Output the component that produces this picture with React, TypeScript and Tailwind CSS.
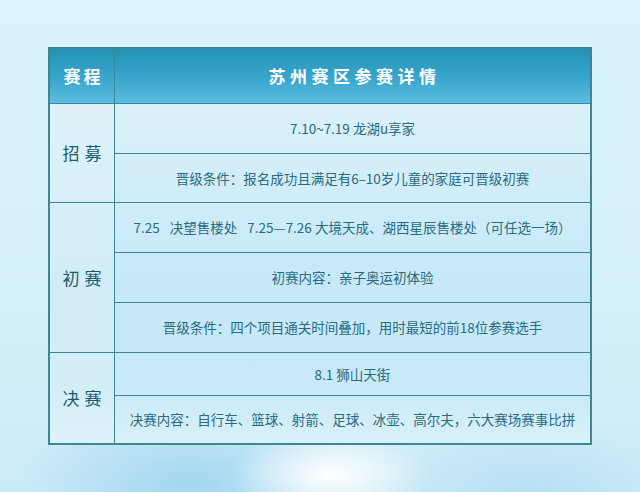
const cell = 'flex items-center justify-center border-r border-b border-[#3d8693] text-center';

function Row({ children, last }: { children: React.ReactNode; last?: boolean }) {
  return (
    <div className={`${cell} text-[13.5px] text-[#2a6b80] ${last ? 'border-b-2' : ''} border-r-2`}>
      {children}
    </div>
  );
}

function Stage({ label, span, last }: { label: string; span: string; last?: boolean }) {
  return (
    <div className={`${cell} ${span} ${last ? 'border-b-2' : ''} text-[17px] tracking-[5px] pl-[5px] text-[#1e5b6d] bg-[#e6f6fb]/40`}>
      {label}
    </div>
  );
}

export default function App() {
  return (
    <div className="h-[492px] w-[640px] overflow-hidden font-['Noto_Sans_CJK_SC',sans-serif] bg-[radial-gradient(ellipse_100px_45px_at_330px_475px,#ffffff_0%,rgba(255,255,255,0)_100%),radial-gradient(ellipse_170px_80px_at_190px_485px,#a3d6f1_0%,rgba(163,214,241,0)_100%),radial-gradient(ellipse_150px_70px_at_530px_495px,#b6e0f4_0%,rgba(182,224,244,0)_100%),linear-gradient(180deg,#dcf5fb_0%,#d5f1fa_60%,#cbeaf7_100%)] pt-[47px] pl-[48px]">
      <div className="w-[544px] border-l-2 border-t-2 border-[#3d8693] grid grid-cols-[65px_1fr] grid-rows-[55px_50px_49px_50px_50px_50px_43px_49px] bg-[linear-gradient(180deg,#e3f5fb_0%,#d3eef9_30%,#c6e8f7_60%,#c8e9f7_85%,#d9f1fa_100%)]">
        <div className={`${cell} bg-[linear-gradient(180deg,#2492b7_0%,#3aa6cc_55%,#5bbde0_100%)] text-white font-semibold text-[17px] tracking-[3px] pl-[3px]`}>
          赛程
        </div>
        <div className={`${cell} border-r-2 bg-[linear-gradient(180deg,#2492b7_0%,#3aa6cc_55%,#5bbde0_100%)] text-white font-semibold text-[17px] tracking-[4.5px] pl-[4px]`}>
          苏州赛区参赛详情
        </div>

        <Stage label="招募" span="row-span-2" />
        <Row>7.10~7.19 龙湖u享家</Row>
        <Row>晋级条件：报名成功且满足有6–10岁儿童的家庭可晋级初赛</Row>

        <Stage label="初赛" span="row-span-3" />
        <Row>
          <span>7.25</span>
          <span className="ml-[10px]">决望售楼处</span>
          <span className="ml-[10px]">7.25—7.26 大境天成、湖西星辰售楼处（可任选一场）</span>
        </Row>
        <Row>初赛内容：亲子奥运初体验</Row>
        <Row>晋级条件：四个项目通关时间叠加，用时最短的前18位参赛选手</Row>

        <Stage label="决赛" span="row-span-2" last />
        <Row>8.1 狮山天街</Row>
        <Row last>决赛内容：自行车、篮球、射箭、足球、冰壶、高尔夫，六大赛场赛事比拼</Row>
      </div>
    </div>
  );
}
